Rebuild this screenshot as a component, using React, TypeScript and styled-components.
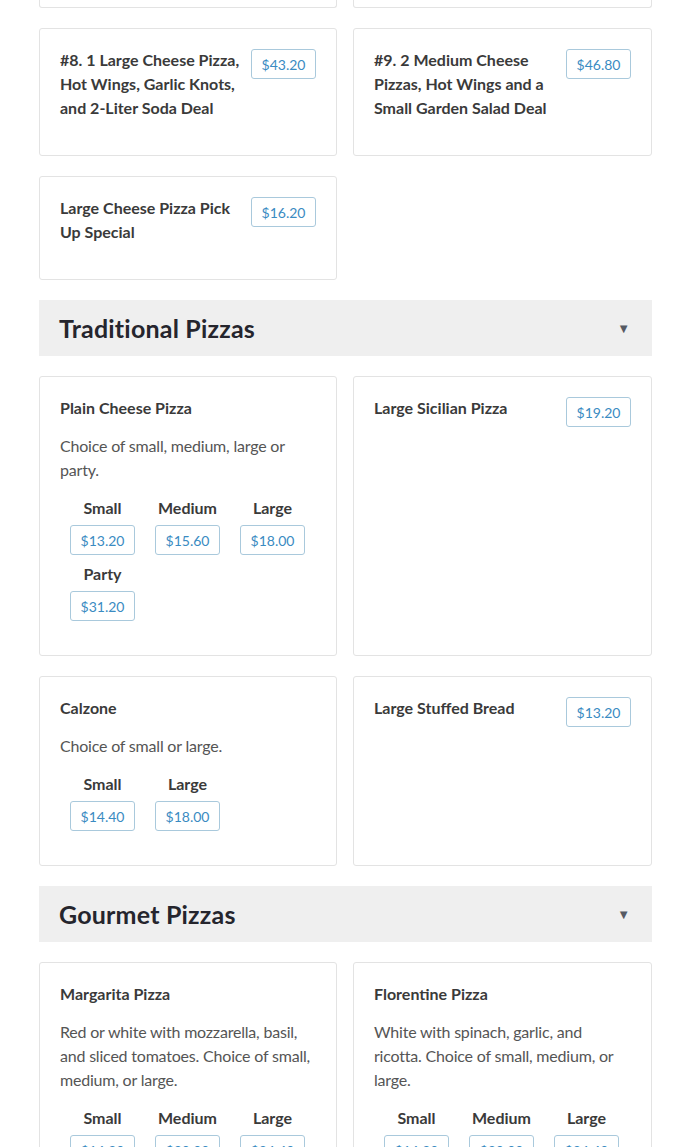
import styled, { createGlobalStyle } from "styled-components";

type Size = { label: string; price: string };
type Item = { name: string; desc?: string; price?: string; sizes?: Size[] };

const deals: Item[] = [
  { name: "#8. 1 Large Cheese Pizza, Hot Wings, Garlic Knots, and 2-Liter Soda Deal", price: "$43.20" },
  { name: "#9. 2 Medium Cheese Pizzas, Hot Wings and a Small Garden Salad Deal", price: "$46.80" },
  { name: "Large Cheese Pizza Pick Up Special", price: "$16.20" },
];

const traditional: Item[] = [
  {
    name: "Plain Cheese Pizza",
    desc: "Choice of small, medium, large or party.",
    sizes: [
      { label: "Small", price: "$13.20" },
      { label: "Medium", price: "$15.60" },
      { label: "Large", price: "$18.00" },
      { label: "Party", price: "$31.20" },
    ],
  },
  { name: "Large Sicilian Pizza", price: "$19.20" },
  {
    name: "Calzone",
    desc: "Choice of small or large.",
    sizes: [
      { label: "Small", price: "$14.40" },
      { label: "Large", price: "$18.00" },
    ],
  },
  { name: "Large Stuffed Bread", price: "$13.20" },
];

const gourmet: Item[] = [
  {
    name: "Margarita Pizza",
    desc: "Red or white with mozzarella, basil, and sliced tomatoes. Choice of small, medium, or large.",
    sizes: [
      { label: "Small", price: "$16.80" },
      { label: "Medium", price: "$20.00" },
      { label: "Large", price: "$24.40" },
    ],
  },
  {
    name: "Florentine Pizza",
    desc: "White with spinach, garlic, and ricotta. Choice of small, medium, or large.",
    sizes: [
      { label: "Small", price: "$16.80" },
      { label: "Medium", price: "$20.00" },
      { label: "Large", price: "$24.40" },
    ],
  },
];

const MenuCard = ({ item }: { item: Item }) => (
  <Card>
    <CardHead>
      <Title>{item.name}</Title>
      {item.price && <Price $raised>{item.price}</Price>}
    </CardHead>
    {item.desc && <Desc>{item.desc}</Desc>}
    {item.sizes && (
      <Sizes>
        {item.sizes.map((s) => (
          <SizeOption key={s.label}>
            <SizeLabel>{s.label}</SizeLabel>
            <Price>{s.price}</Price>
          </SizeOption>
        ))}
      </Sizes>
    )}
  </Card>
);

const Section = ({ title }: { title: string }) => (
  <SectionBar>
    <SectionTitle>{title}</SectionTitle>
    <Caret>▼</Caret>
  </SectionBar>
);

const App = () => {
  return (
    <>
      <GlobalStyle />
      <Page>
        <Grid>
          <Card $cut />
          <Card $cut />
        </Grid>
        <Grid>
          {deals.map((d) => (
            <MenuCard key={d.name} item={d} />
          ))}
        </Grid>
        <Section title="Traditional Pizzas" />
        <Grid>
          {traditional.map((d) => (
            <MenuCard key={d.name} item={d} />
          ))}
        </Grid>
        <Section title="Gourmet Pizzas" />
        <Grid>
          {gourmet.map((d) => (
            <MenuCard key={d.name} item={d} />
          ))}
        </Grid>
      </Page>
    </>
  );
};

export default App;

const GlobalStyle = createGlobalStyle`
  body {
    margin: 0;
    background: #fff;
    font-family: Lato, "Liberation Sans", sans-serif;
    color: #333;
  }
`;

const Page = styled.div`
  width: 613px;
  margin: 0 0 0 39px;
  display: flex;
  flex-direction: column;
  gap: 20px;
`;

const Grid = styled.div`
  display: grid;
  grid-template-columns: 298px 299px;
  column-gap: 16px;
  row-gap: 20px;
`;

const Card = styled.div<{ $cut?: boolean }>`
  box-sizing: border-box;
  border: 1px solid #e3e3e3;
  border-radius: 3px;
  padding: 19px 20px 21px;
  background: #fff;
  ${(p) =>
    p.$cut &&
    `
    height: 8px;
    padding: 0;
    border-top: none;
    border-radius: 0 0 3px 3px;
  `}
`;

const CardHead = styled.div`
  display: flex;
  align-items: flex-start;
  gap: 10px;
`;

const Title = styled.div`
  flex: 1;
  font-size: 16px;
  font-weight: 700;
  line-height: 24px;
  color: #3a3a3a;
  margin-bottom: 14px;
`;

const Price = styled.div<{ $raised?: boolean }>`
  box-sizing: border-box;
  width: 65px;
  height: 30px;
  margin-top: ${(p) => (p.$raised ? "1px" : "0")};
  display: flex;
  align-items: center;
  justify-content: center;
  border: 1px solid #a9c9dc;
  border-radius: 3px;
  font-size: 14px;
  color: #3a8bc2;
  background: #fff;
`;

const Desc = styled.div`
  font-size: 16px;
  line-height: 24px;
  letter-spacing: -0.2px;
  color: #555;
  margin-bottom: 14px;
`;

const Sizes = styled.div`
  display: flex;
  flex-wrap: wrap;
  row-gap: 7px;
  margin-bottom: 13px;
`;

const SizeOption = styled.div`
  display: flex;
  flex-direction: column;
  align-items: center;
  gap: 5px;
  margin: 0 10px;
`;

const SizeLabel = styled.div`
  font-size: 16px;
  font-weight: 700;
  line-height: 24px;
  color: #3a3a3a;
`;

const SectionBar = styled.div`
  height: 56px;
  background: #efefef;
  display: flex;
  align-items: center;
  justify-content: space-between;
  padding: 0 22px 0 20px;
`;

const SectionTitle = styled.h2`
  margin: 0;
  font-size: 25px;
  font-weight: 700;
  color: #25252d;
  letter-spacing: 0.2px;
`;

const Caret = styled.span`
  font-size: 13px;
  color: #555a63;
`;
